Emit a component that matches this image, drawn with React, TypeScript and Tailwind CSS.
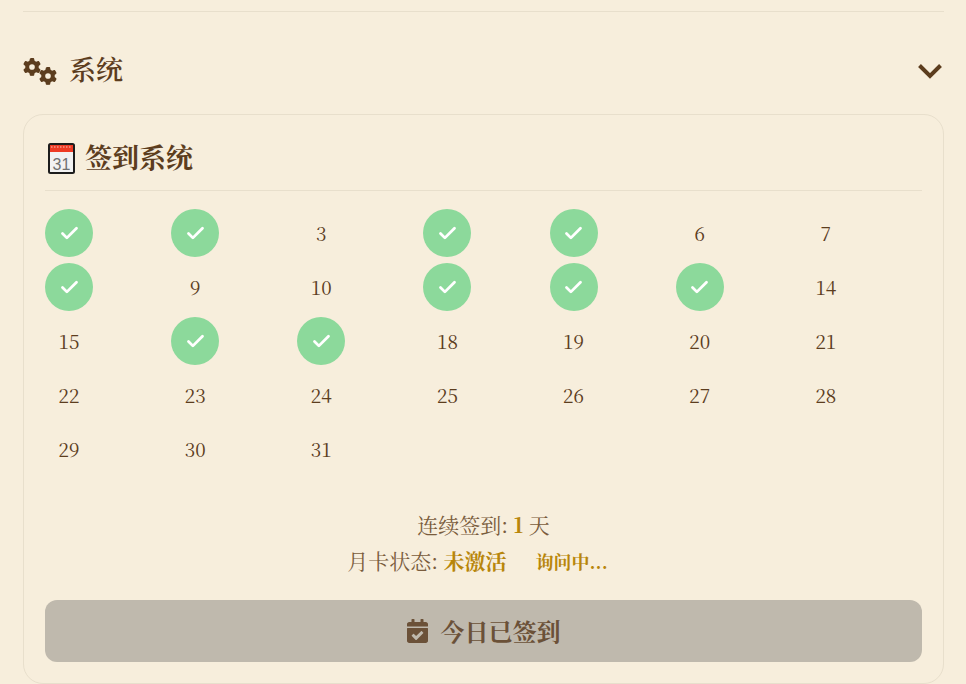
import { FaCalendarCheck } from 'react-icons/fa';
import { FaGear } from 'react-icons/fa6';
import { Check } from 'lucide-react';

const CHECKED = [1, 2, 4, 5, 8, 11, 12, 13, 16, 17];
const DAYS = Array.from({ length: 31 }, (_, i) => i + 1);

function CalendarEmoji() {
  return (
    <svg width="27" height="31" viewBox="0 0 27 31" className="shrink-0">
      <rect x="1" y="1" width="25" height="29" rx="1.5" fill="#f2f2f2" stroke="#1c1c1c" strokeWidth="2" />
      <rect x="2" y="2" width="23" height="7" fill="#ee3b24" />
      <path d="M3 4h21" stroke="#f9c9c0" strokeWidth="1" strokeDasharray="1.5 1.5" />
      <text x="13.5" y="26.5" textAnchor="middle" fontSize="16" fill="#707070" fontFamily="Liberation Sans, sans-serif">
        31
      </text>
    </svg>
  );
}

export default function App() {
  return (
    <div className="h-[684px] overflow-hidden bg-[#f7eedc] px-[22px] pt-[11px] font-['Noto_Serif_CJK_SC','Liberation_Serif',serif] text-[#5c3d1e]">
      <div className="ml-px border-t border-[#e8dfcc]" />

      <div className="ml-px flex h-[102px] items-center justify-between pt-[16px]">
        <div className="flex items-center gap-[13px]">
          <div className="flex w-[33px] items-center text-[#5c3d1e]">
            <FaGear className="mb-[9px] h-[18px] w-[18px] shrink-0" />
            <FaGear className="-ml-[2px] mt-[9px] h-[18px] w-[18px] shrink-0" />
          </div>
          <span className="pb-[5px] text-[27px] font-semibold leading-none">系统</span>
        </div>
        <svg width="26" height="16" viewBox="0 0 26 16" fill="none" className="mr-px">
          <path d="M2.5 2.5 13 13 23.5 2.5" stroke="#5c3d1e" strokeWidth="4" />
        </svg>
      </div>

      <div className="ml-px rounded-[20px] border border-[#e8dfcc] px-[21px] pb-[21px] pt-[21px]">
        <div className="flex h-[55px] items-start gap-[10px] border-b border-[#e8dfcc] pl-[3px] pt-[7px]">
          <CalendarEmoji />
          <h2 className="-mt-[3px] text-[27px] font-bold leading-[34px]">签到系统</h2>
        </div>

        <div className="mt-[18px] grid grid-cols-7 gap-[6px]">
          {DAYS.map(day => (
            <div key={day} className="h-12 w-12">
              {CHECKED.includes(day) ? (
                <div className="flex h-12 w-12 items-center justify-center rounded-full bg-[#8cd99b]">
                  <Check size={21} strokeWidth={3.2} className="text-white" />
                </div>
              ) : (
                <div className="flex h-12 w-12 items-center justify-center text-[19px] text-[#5c3d1e]">{day}</div>
              )}
            </div>
          ))}
        </div>

        <div className="mt-[33px] text-center text-[21px] leading-[36px] text-[#7a5c3d]">
          <p>
            连续签到: <span className="font-bold text-[#b8860b]">1</span> 天
          </p>
          <p className="pr-[12px]">
            月卡状态: <span className="font-bold text-[#b8860b]">未激活</span>
            <span className="ml-[29px] text-[18px] font-bold text-[#b8860b]">询问中...</span>
          </p>
        </div>

        <button className="mt-[21px] flex h-[62px] w-full items-center justify-center gap-[13px] rounded-[12px] bg-[#bfb9ad] text-[24px] font-bold text-[#6b5138]">
          <FaCalendarCheck className="h-[24px] w-[21px]" />
          今日已签到
        </button>
      </div>
    </div>
  );
}
